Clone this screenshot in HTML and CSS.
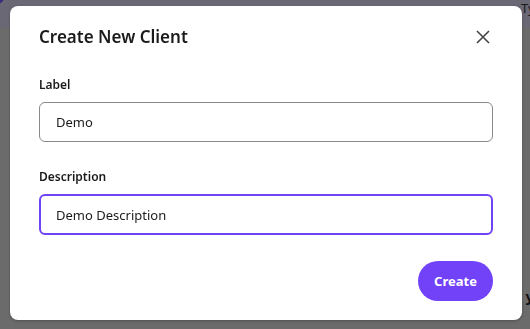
FILE: index.html
```html
<!DOCTYPE html>
<html lang="en">
<head>
  <meta charset="UTF-8">
  <title>Create New Client</title>
  <link rel="stylesheet" href="styles.css">
</head>
<body>
  <div class="page">
    <header class="topbar">
      <span class="avatar"></span>
      <span class="topbar-text">Type</span>
    </header>
    <main class="content">
      <span class="peek">y</span>
    </main>
  </div>

  <div class="overlay">
    <div class="modal">
      <div class="modal-head">
        <h2>Create New Client</h2>
        <button class="close" aria-label="Close">
          <svg width="14" height="14" viewBox="0 0 14 14">
            <path d="M1 1 L13 13 M13 1 L1 13" stroke="#444" stroke-width="1.6" fill="none"/>
          </svg>
        </button>
      </div>

      <label class="field-label" for="label">Label</label>
      <input class="field" id="label" type="text" value="Demo">

      <label class="field-label" for="desc">Description</label>
      <input class="field focused" id="desc" type="text" value="Demo Description">

      <div class="actions">
        <button class="primary">Create</button>
      </div>
    </div>
  </div>
</body>
</html>
```

FILE: styles.css
```css
* { box-sizing: border-box; }

html, body {
  margin: 0;
  height: 100%;
  overflow: hidden;
}

body {
  font-family: "Noto Sans", "Open Sans", sans-serif;
  color: #1b1b1b;
  background: #6b6b6b;
}

.page {
  height: 100%;
  display: flex;
  flex-direction: column;
}

.topbar {
  height: 28px;
  background: #6b6875;
  position: relative;
  display: flex;
  justify-content: flex-end;
  align-items: center;
}
.avatar {
  position: absolute;
  left: -10px;
  top: -10px;
  width: 14px;
  height: 14px;
  border-radius: 50%;
  background: #3d2a7a;
}
.topbar-text {
  font-size: 13px;
  color: #1a1a1a;
  margin-right: -20px;
  margin-top: -12px;
}

.content {
  flex: 1;
  position: relative;
}
.peek {
  position: absolute;
  right: -4px;
  top: 258px;
  font-size: 15px;
  font-weight: 700;
  color: #111;
}

.overlay {
  position: fixed;
  inset: 0;
}

.modal {
  position: absolute;
  left: 10px;
  top: 6px;
  width: 512px;
  height: 314px;
  background: #fff;
  border-radius: 8px;
  padding: 22px 29px 0 29px;
  box-shadow: 0 1px 3px rgba(0, 0, 0, 0.25);
}

.modal-head {
  display: flex;
  justify-content: space-between;
  align-items: center;
  margin-bottom: 30px;
}
.modal-head h2 {
  margin: 0;
  font-size: 17px;
  font-weight: 600;
  line-height: 18px;
}
.close {
  background: none;
  border: 0;
  padding: 0;
  width: 14px;
  height: 14px;
  margin-right: 3px;
  cursor: pointer;
}

.field-label {
  display: block;
  font-size: 12px;
  font-weight: 600;
  line-height: 17px;
  margin-bottom: 9px;
}

.field {
  display: block;
  width: 100%;
  height: 40px;
  font-family: inherit;
  font-size: 13px;
  color: #1b1b1b;
  padding: 0 16px;
  border: 1px solid #8a8a8a;
  border-radius: 6px;
  margin-bottom: 26px;
  outline: none;
}
.field.focused {
  border: 2px solid #7043f6;
  padding: 0 15px;
  height: 41px;
}

.actions {
  display: flex;
  justify-content: flex-end;
  margin-top: 21px;
}
.primary {
  height: 40px;
  width: 75px;
  border: 0;
  border-radius: 20px;
  background: #7142f8;
  color: #fff;
  font-family: inherit;
  font-size: 13px;
  font-weight: 700;
}
```
